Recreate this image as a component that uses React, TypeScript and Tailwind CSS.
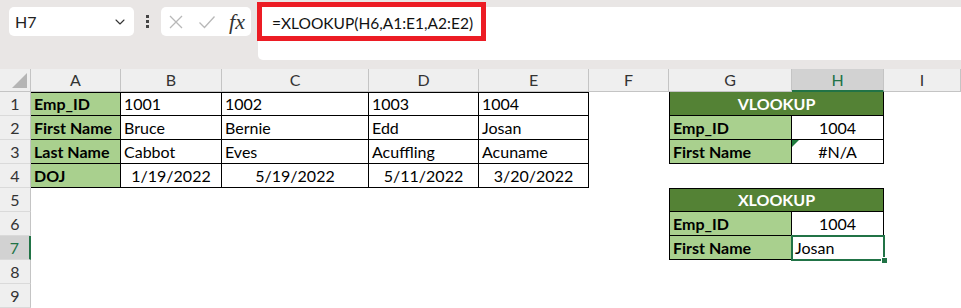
import React from "react";
import { ChevronDown } from "lucide-react";

type Cell = {
  text?: string;
  span?: number;
  className?: string;
  extra?: React.ReactNode;
};

// column widths: row header, A..I
const widths = [31, 90, 101, 147, 110, 110, 80, 123, 92, 77];
const letters = ["A", "B", "C", "D", "E", "F", "G", "H", "I"];

const green = "bg-[#a9d08e] font-bold";
const dark = "bg-[#548235] text-white font-bold justify-center";
const b = "border-black";

const rows: Cell[][] = [
  [
    { text: "Emp_ID", className: `${green} border-t border-r border-b ${b}` },
    { text: "1001", className: `border-t border-r border-b ${b}` },
    { text: "1002", className: `border-t border-r border-b ${b}` },
    { text: "1003", className: `border-t border-r border-b ${b}` },
    { text: "1004", className: `border-t border-r border-b ${b}` },
    {},
    { text: "VLOOKUP", span: 2, className: `${dark} border-l border-r border-b ${b}` },
    {},
  ],
  [
    { text: "First Name", className: `${green} border-r border-b ${b}` },
    { text: "Bruce", className: `border-r border-b ${b}` },
    { text: "Bernie", className: `border-r border-b ${b}` },
    { text: "Edd", className: `border-r border-b ${b}` },
    { text: "Josan", className: `border-r border-b ${b}` },
    {},
    { text: "Emp_ID", className: `${green} border-l border-r border-b ${b}` },
    { text: "1004", className: `justify-center border-r border-b ${b}` },
    {},
  ],
  [
    { text: "Last Name", className: `${green} border-r border-b ${b}` },
    { text: "Cabbot", className: `border-r border-b ${b}` },
    { text: "Eves", className: `border-r border-b ${b}` },
    { text: "Acuffling", className: `border-r border-b ${b}` },
    { text: "Acuname", className: `border-r border-b ${b}` },
    {},
    { text: "First Name", className: `${green} border-l border-r border-b ${b}` },
    {
      text: "#N/A",
      className: `justify-center border-r border-b ${b} relative`,
      extra: (
        <svg className="absolute left-0 top-0" width="7" height="7" viewBox="0 0 7 7">
          <polygon points="0,0 7,0 0,7" fill="#1e7b3c" />
        </svg>
      ),
    },
    {},
  ],
  [
    { text: "DOJ", className: `${green} border-r border-b ${b}` },
    { text: "1/19/2022", className: `justify-center border-r border-b ${b}` },
    { text: "5/19/2022", className: `justify-center border-r border-b ${b}` },
    { text: "5/11/2022", className: `justify-center border-r border-b ${b}` },
    { text: "3/20/2022", className: `justify-center border-r border-b ${b}` },
    {},
    {},
    {},
    {},
  ],
  [
    {}, {}, {}, {}, {}, {},
    { text: "XLOOKUP", span: 2, className: `${dark} border-t border-l border-r border-b ${b}` },
    {},
  ],
  [
    {}, {}, {}, {}, {}, {},
    { text: "Emp_ID", className: `${green} border-l border-r border-b ${b}` },
    { text: "1004", className: `justify-center border-r border-b ${b}` },
    {},
  ],
  [
    {}, {}, {}, {}, {}, {},
    { text: "First Name", className: `${green} border-l border-r border-b ${b}` },
    {
      text: "Josan",
      className: "relative",
      extra: (
        <>
          <div className="absolute -left-[1px] -top-[1px] -right-[1px] -bottom-[1px] border-2 border-[#217346]" />
          <div className="absolute -right-[4px] -bottom-[4px] w-[7px] h-[7px] bg-[#217346] border border-white" />
        </>
      ),
    },
    {},
  ],
  [],
  [],
];

function cellWidth(col: number, span = 1) {
  let w = 0;
  for (let i = 0; i < span; i++) w += widths[col + 1 + i];
  return w;
}

const App = () => {
  return (
    <div className="w-[961px] h-[308px] overflow-hidden bg-white font-['Lato',sans-serif] text-[16px] text-black">
      {/* formula bar */}
      <div className="h-[69px] bg-[#e9e6e5] flex items-start pt-[7px]">
        <div className="ml-[9px] w-[125px] h-[29px] rounded-[5px] bg-white flex items-center justify-between pl-[6px] pr-[6px] text-[#222]">
          <span className="text-[16px]">H7</span>
          <ChevronDown size={16} strokeWidth={1.6} className="text-[#333]" />
        </div>
        <div className="w-[27px] h-[29px] flex flex-col items-center justify-center gap-[2px]">
          <span className="w-[3px] h-[3px] bg-[#444]" />
          <span className="w-[3px] h-[3px] bg-[#444]" />
          <span className="w-[3px] h-[3px] bg-[#444]" />
        </div>
        <div className="w-[90px] h-[29px] rounded-[5px] bg-white flex items-center pl-[7px] pr-[6px] justify-between">
          <svg width="16" height="16" viewBox="0 0 16 16">
            <path d="M2 2 L14 14 M14 2 L2 14" stroke="#b8b8b8" strokeWidth="1.3" fill="none" />
          </svg>
          <svg width="18" height="16" viewBox="0 0 18 16">
            <path d="M1.5 8.5 L6.5 13.5 L16.5 2.5" stroke="#b8b8b8" strokeWidth="1.3" fill="none" />
          </svg>
          <span className="font-['Liberation_Serif',serif] italic text-[22px] leading-none text-[#333]">fx</span>
        </div>
        <div className="ml-[7px] flex-1 h-[53px] rounded-l-[5px] bg-white relative">
          <div className="absolute left-[14px] top-[5px] text-[15.5px] text-[#111]">=XLOOKUP(H6,A1:E1,A2:E2)</div>
          <div className="absolute -left-[1px] -top-[5px] w-[229px] h-[39px] border-[5px] border-[#ec1c24]" />
        </div>
      </div>

      {/* column headers */}
      <div className="flex h-[23px]">
        <div className="w-[31px] shrink-0 bg-[#efefef] border-r border-b border-[#c4c4c4] relative">
          <svg className="absolute right-[3px] bottom-[3px]" width="15" height="15" viewBox="0 0 15 15">
            <polygon points="15,0 15,15 0,15" fill="#b5b5b5" />
          </svg>
        </div>
        {letters.map((l, i) => {
          const sel = l === "H";
          return (
            <div
              key={l}
              style={{ width: widths[i + 1] }}
              className={
                sel
                  ? "shrink-0 bg-[#d2d2d2] border-r border-[#c4c4c4] border-b-2 border-b-[#217346] flex items-center justify-center text-[#217346]"
                  : "shrink-0 bg-[#efefef] border-r border-b border-[#c4c4c4] flex items-center justify-center text-[#333]"
              }
            >
              {l}
            </div>
          );
        })}
      </div>

      {/* rows */}
      {rows.map((row, r) => {
        const sel = r === 6;
        let col = 0;
        const cells: React.ReactNode[] = [];
        for (const c of row) {
          if (col >= letters.length) break;
          const span = c.span ?? 1;
          cells.push(
            <div
              key={col}
              style={{ width: cellWidth(col, span) }}
              className={`shrink-0 h-full flex items-center px-[3px] whitespace-nowrap ${c.className ?? ""}`}
            >
              {c.text}
              {c.extra}
            </div>
          );
          col += span;
        }
        while (col < letters.length) {
          cells.push(<div key={col} style={{ width: cellWidth(col) }} className="shrink-0 h-full" />);
          col++;
        }
        return (
          <div key={r} className="flex h-[24px]">
            <div
              className={
                sel
                  ? "w-[31px] shrink-0 bg-[#d2d2d2] border-r-2 border-r-[#217346] border-b border-b-[#dadada] flex items-center justify-center text-[#217346]"
                  : "w-[31px] shrink-0 bg-[#efefef] border-r border-r-[#c4c4c4] border-b border-b-[#dadada] flex items-center justify-center text-[#333]"
              }
            >
              {r + 1}
            </div>
            {cells}
          </div>
        );
      })}
    </div>
  );
};

export default App;
